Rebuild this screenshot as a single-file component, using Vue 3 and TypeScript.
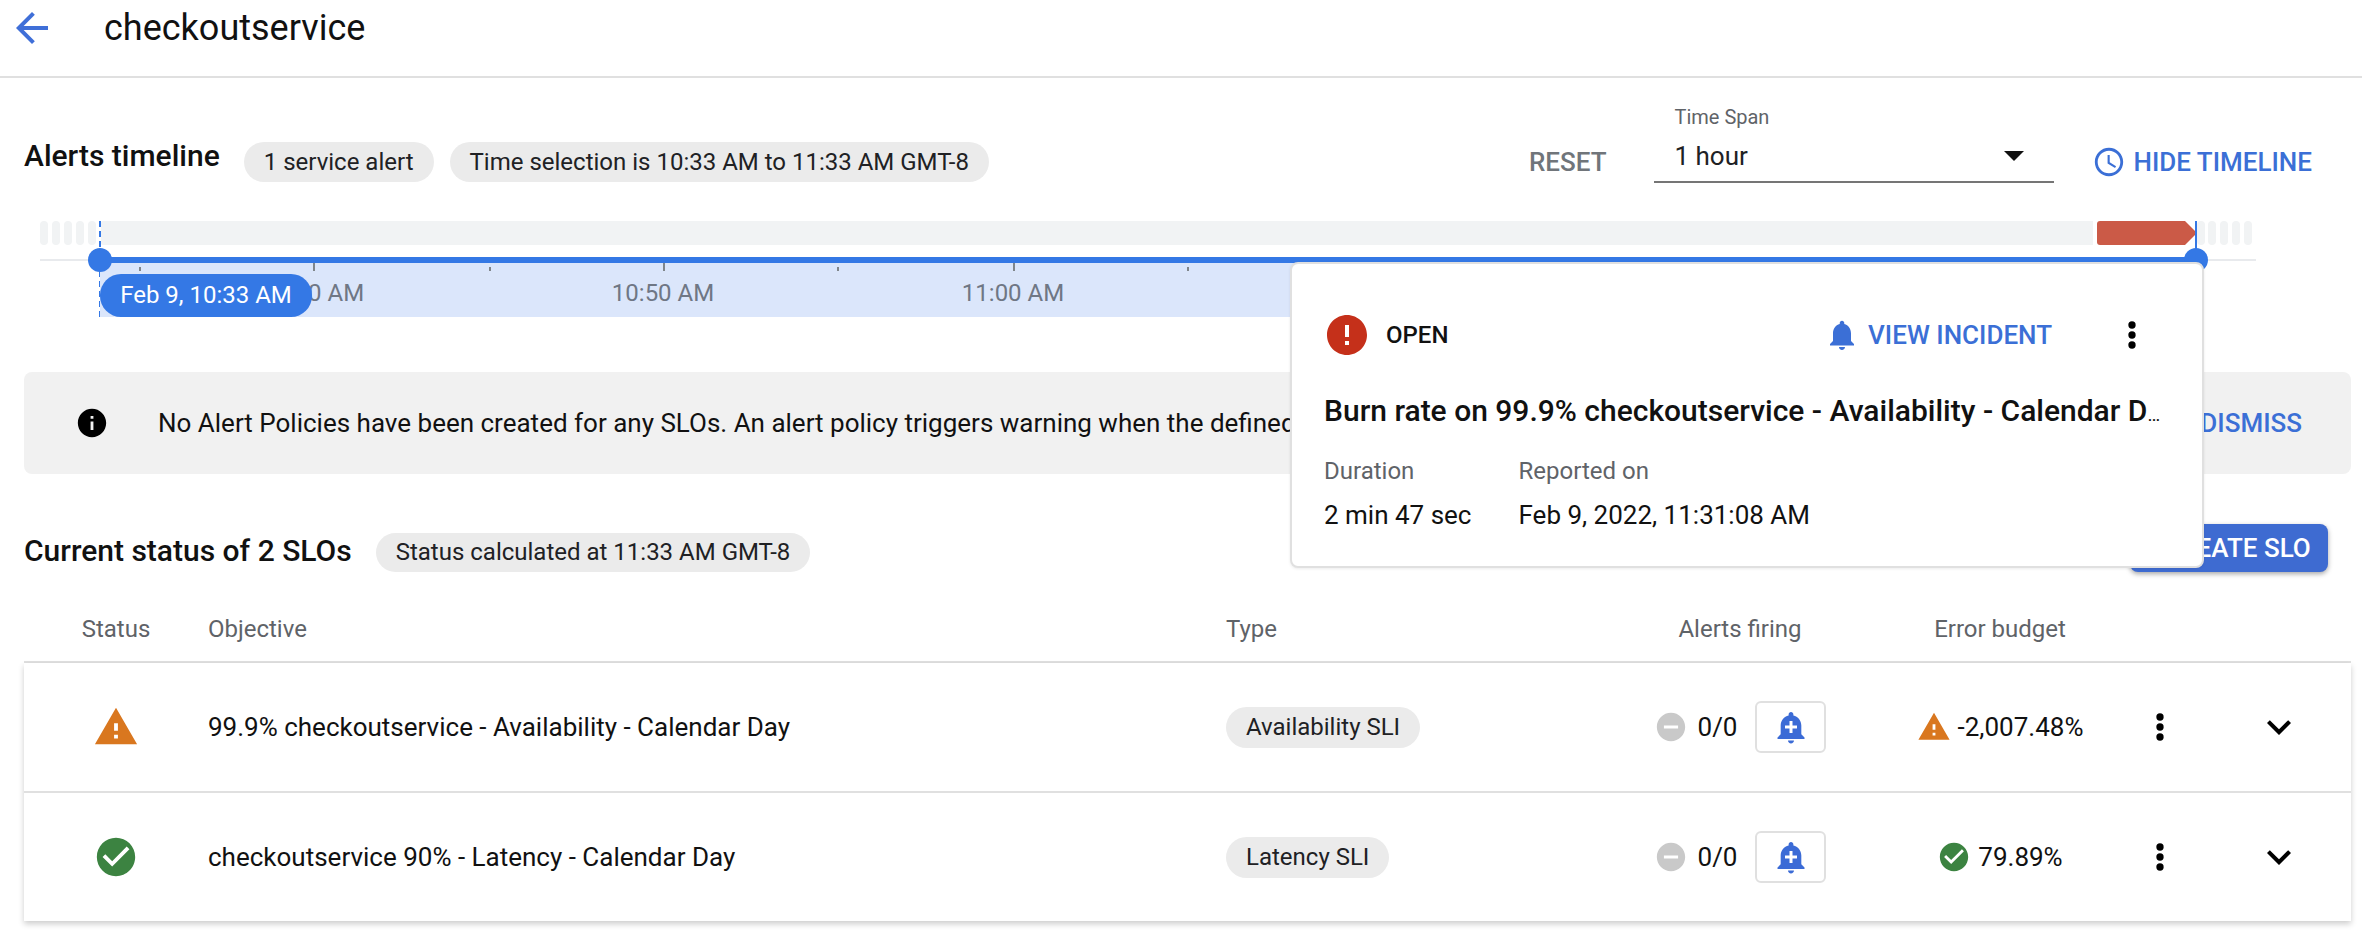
<template>
  <div class="page">
    <!-- Top bar -->
    <header class="topbar">
      <svg class="back-icon" viewBox="0 0 24 24"><path :d="icons.back" /></svg>
      <h1 class="topbar__title">checkoutservice</h1>
    </header>

    <!-- Timeline header -->
    <section class="tl-head">
      <h2 class="section-title tl-head__title">Alerts timeline</h2>
      <span class="chip chip--alert">1 service alert</span>
      <span class="chip chip--range">Time selection is 10:33 AM to 11:33 AM GMT-8</span>
      <button class="text-btn text-btn--grey">RESET</button>
      <div class="span-field">
        <span class="span-field__label">Time Span</span>
        <div class="span-field__value">
          <span>1 hour</span>
          <i class="span-field__arrow"></i>
        </div>
      </div>
      <button class="text-btn text-btn--blue hide-btn">
        <svg class="hide-btn__icon" viewBox="0 0 24 24"><path :d="icons.clock" /></svg>
        HIDE TIMELINE
      </button>
    </section>

    <!-- Timeline canvas -->
    <section class="timeline">
      <i v-for="x in pills" :key="x" class="pill" :style="{ left: x + 'px' }"></i>
      <div class="track"></div>
      <div class="incident"></div>
      <i class="dash dash--left"></i>
      <i class="cursor cursor--right"></i>
      <div class="axis"></div>
      <div class="selection"></div>
      <div class="range-bar"></div>
      <i class="handle handle--left"></i>
      <i class="handle handle--right"></i>
      <i
        v-for="t in ticks"
        :key="t.x"
        class="tick"
        :class="{ 'tick--major': t.major }"
        :style="{ left: t.x + 'px' }"
      ></i>
      <span
        v-for="l in tickLabels"
        :key="l.text"
        class="tick-label"
        :style="{ left: l.x + 'px' }"
      >{{ l.text }}</span>
      <span class="date-chip">Feb 9, 10:33 AM</span>

      <!-- Incident popup -->
      <div class="popup">
        <div class="popup__top">
          <svg class="popup__status" viewBox="0 0 24 24"><path :d="icons.error" /></svg>
          <span class="popup__open">OPEN</span>
          <button class="text-btn text-btn--blue popup__view">
            <svg class="popup__bell" viewBox="0 0 24 24"><path :d="icons.bell" /></svg>
            VIEW INCIDENT
          </button>
          <svg class="more-icon popup__more" viewBox="0 0 24 24">
            <circle cx="12" cy="6" r="2.2" /><circle cx="12" cy="12" r="2.2" /><circle cx="12" cy="18" r="2.2" />
          </svg>
        </div>
        <div class="popup__title">Burn rate on 99.9% checkoutservice - Availability - Calendar D<span class="popup__ellipsis">…</span></div>
        <div class="popup__meta">
          <div class="popup__col">
            <span class="popup__label">Duration</span>
            <span class="popup__val">2 min 47 sec</span>
          </div>
          <div class="popup__col">
            <span class="popup__label">Reported on</span>
            <span class="popup__val">Feb 9, 2022, 11:31:08 AM</span>
          </div>
        </div>
      </div>
    </section>

    <!-- Banner -->
    <section class="banner">
      <svg class="banner__icon" viewBox="0 0 24 24"><path :d="icons.info" /></svg>
      <p class="banner__text">No Alert Policies have been created for any SLOs. An alert policy triggers warning when the defined</p>
      <button class="text-btn text-btn--blue">DISMISS</button>
    </section>

    <!-- Status -->
    <section class="status-head">
      <h2 class="section-title status-head__title">Current status of 2 SLOs</h2>
      <span class="chip chip--calc">Status calculated at 11:33 AM GMT-8</span>
      <button class="create-btn">CREATE SLO</button>
    </section>

    <section class="table">
      <div class="row row--head">
        <span class="cell--center">Status</span>
        <span>Objective</span>
        <span>Type</span>
        <span class="cell--center">Alerts firing</span>
        <span class="cell--center">Error budget</span>
      </div>
      <div class="table__body">
        <div v-for="slo in slos" :key="slo.name" class="row">
          <span class="cell--center">
            <svg class="status-icon" :class="`is-${slo.state}`" viewBox="0 0 24 24">
              <path :d="slo.state === 'warn' ? icons.warning : icons.check" />
            </svg>
          </span>
          <span>{{ slo.name }}</span>
          <span><span class="chip chip--type">{{ slo.type }}</span></span>
          <span class="alerts">
            <svg class="alerts__icon" viewBox="0 0 24 24"><path :d="icons.remove" /></svg>
            <span>0/0</span>
            <button class="bell-btn">
              <svg viewBox="0 0 24 24"><path :d="icons.addAlert" /></svg>
            </button>
          </span>
          <span class="budget">
            <svg class="budget__icon" :class="`is-${slo.state}`" viewBox="0 0 24 24">
              <path :d="slo.state === 'warn' ? icons.warning : icons.check" />
            </svg>
            {{ slo.budget }}
          </span>
          <span class="cell--center">
            <svg class="more-icon" viewBox="0 0 24 24">
              <circle cx="12" cy="6" r="2.2" /><circle cx="12" cy="12" r="2.2" /><circle cx="12" cy="18" r="2.2" />
            </svg>
          </span>
          <span class="expand">
            <svg class="expand__icon" viewBox="0 0 24 24"><path :d="icons.expand" /></svg>
          </span>
        </div>
      </div>
    </section>
  </div>
</template>

<script setup lang="ts">
const icons = {
  back: 'M20 11H7.83l5.59-5.59L12 4l-8 8 8 8 1.41-1.41L7.83 13H20v-2z',
  clock:
    'M11.99 2C6.47 2 2 6.48 2 12s4.47 10 9.99 10C17.52 22 22 17.52 22 12S17.52 2 11.99 2zM12 20c-4.42 0-8-3.58-8-8s3.58-8 8-8 8 3.58 8 8-3.58 8-8 8zM12.5 7H11v6l5.25 3.15.75-1.23-4.5-2.67z',
  error:
    'M12 2C6.48 2 2 6.48 2 12s4.48 10 10 10 10-4.48 10-10S17.52 2 12 2zm1 15h-2v-2h2v2zm0-4h-2V7h2v6z',
  info: 'M12 2C6.48 2 2 6.48 2 12s4.48 10 10 10 10-4.48 10-10S17.52 2 12 2zm1 15h-2v-6h2v6zm0-8h-2V7h2v2z',
  bell: 'M12 22c1.1 0 2-.9 2-2h-4c0 1.1.89 2 2 2zm6-6v-5c0-3.07-1.64-5.64-4.5-6.32V4c0-.83-.67-1.5-1.5-1.5s-1.5.67-1.5 1.5v.68C7.63 5.36 6 7.92 6 11v5l-2 2v1h16v-1l-2-2z',
  addAlert:
    'M10.01 21.01c0 1.1.89 1.99 1.99 1.99s1.99-.89 1.99-1.99h-3.98zm8.87-4.19V11c0-3.25-2.25-5.97-5.29-6.69v-.72C13.59 2.71 12.88 2 12 2s-1.59.71-1.59 1.59v.72C7.37 5.03 5.12 7.75 5.12 11v5.82L3 18.94V20h18v-1.06l-2.12-2.12zM16 13.01h-3v3h-2v-3H8V11h3V8h2v3h3v2.01z',
  warning: 'M1 21h22L12 2 1 21zm12-3h-2v-2h2v2zm0-4h-2v-4h2v4z',
  check:
    'M12 2C6.48 2 2 6.48 2 12s4.48 10 10 10 10-4.48 10-10S17.52 2 12 2zm-2 15l-5-5 1.41-1.41L10 14.17l7.59-7.59L19 8l-9 9z',
  remove:
    'M12 2C6.48 2 2 6.48 2 12s4.48 10 10 10 10-4.48 10-10S17.52 2 12 2zm5 11H7v-2h10v2z',
  expand: 'M16.59 8.59L12 13.17 7.41 8.59 6 10l6 6 6-6z',
};

const pills = [40, 52, 64, 76, 88, 2197, 2208, 2220, 2232, 2244];

const ticks = [139, 313, 489, 663, 837, 1013, 1187].map((x, i) => ({
  x,
  major: i % 2 === 1,
}));

const tickLabels = [
  { x: 313, text: '10:40 AM' },
  { x: 663, text: '10:50 AM' },
  { x: 1013, text: '11:00 AM' },
];

const slos = [
  {
    name: '99.9% checkoutservice - Availability - Calendar Day',
    type: 'Availability SLI',
    budget: '-2,007.48%',
    state: 'warn',
  },
  {
    name: 'checkoutservice 90% - Latency - Calendar Day',
    type: 'Latency SLI',
    budget: '79.89%',
    state: 'ok',
  },
];
</script>

<style>
html,
body {
  margin: 0;
  background: #fff;
  overflow: hidden;
}
</style>

<style scoped>
.page {
  width: 2362px;
  height: 940px;
  overflow: hidden;
  font-family: Roboto, 'Liberation Sans', sans-serif;
  font-size: 26px;
  color: #111;
  background: #fff;
}

button {
  font: inherit;
  border: none;
  background: none;
  padding: 0;
}

/* Top bar */
.topbar {
  display: flex;
  align-items: center;
  box-sizing: border-box;
  height: 78px;
  padding-bottom: 20px;
  border-bottom: 2px solid #e0e0e0;
}
.back-icon {
  width: 48px;
  height: 48px;
  margin-left: 8px;
  fill: #3f6fd8;
}
.topbar__title {
  margin: 0 0 0 48px;
  font-size: 36px;
  font-weight: 400;
  color: #111;
}

/* Timeline header */
.tl-head {
  display: flex;
  align-items: center;
  height: 119px;
  margin-top: 24px;
  padding-left: 24px;
}
.section-title {
  margin: 0;
  font-size: 30px;
  font-weight: 500;
  white-space: nowrap;
}
.tl-head__title {
  margin-bottom: 12px;
}
.status-head__title {
  margin-top: 5px;
}
.chip {
  display: inline-flex;
  align-items: center;
  border-radius: 21px;
  background: #ebebeb;
  font-size: 24px;
  color: #202124;
  white-space: nowrap;
}
.chip--alert {
  height: 40px;
  margin-left: 24px;
  padding: 0 20px;
}
.chip--range {
  height: 40px;
  margin-left: 16px;
  padding: 0 20px;
}
.text-btn {
  font-size: 26px;
  font-weight: 500;
  white-space: nowrap;
}
.text-btn--grey {
  margin-left: auto;
  color: #70757a;
}
.text-btn--blue {
  color: #3b6fd6;
}
.span-field {
  display: flex;
  flex-direction: column;
  align-self: flex-start;
  box-sizing: border-box;
  width: 400px;
  height: 78px;
  margin: 3px 0 0 48px;
  padding-left: 20px;
  border-bottom: 2px solid #757575;
}
.span-field__label {
  font-size: 20px;
  line-height: 24px;
  color: #5f6368;
}
.span-field__value {
  display: flex;
  align-items: center;
  justify-content: space-between;
  margin-top: 11px;
  padding-right: 30px;
  line-height: 32px;
  color: #202124;
}
.span-field__arrow {
  width: 0;
  height: 0;
  border-left: 10px solid transparent;
  border-right: 10px solid transparent;
  border-top: 10px solid #111;
}
.hide-btn {
  display: flex;
  align-items: center;
  gap: 7px;
  margin: 0 50px 0 38px;
}
.hide-btn__icon {
  width: 34px;
  height: 34px;
  fill: #3b6fd6;
}

/* Timeline canvas */
.timeline {
  position: relative;
  height: 151px;
}
.pill {
  position: absolute;
  top: 0;
  width: 8px;
  height: 24px;
  border-radius: 4px;
  background: #f1f3f4;
}
.track {
  position: absolute;
  top: 0;
  left: 101px;
  width: 1992px;
  height: 24px;
  border-radius: 2px 0 0 2px;
  background: #f1f3f4;
}
.incident {
  position: absolute;
  top: 0;
  left: 2097px;
  width: 100px;
  height: 24px;
  border-radius: 3px 0 0 3px;
  background: #cb5a47;
  clip-path: polygon(0 0, 88% 0, 100% 50%, 88% 100%, 0 100%);
}
.dash {
  position: absolute;
  top: 0;
  left: 99px;
  height: 96px;
  border-left: 2px dashed #3478e5;
}
.cursor {
  position: absolute;
  top: 0;
  left: 2195px;
  height: 36px;
  border-left: 2px solid #3478e5;
}
.axis {
  position: absolute;
  top: 38px;
  left: 40px;
  width: 2216px;
  height: 2px;
  background: #e8eaed;
}
.selection {
  position: absolute;
  top: 40px;
  left: 100px;
  width: 1300px;
  height: 56px;
  background: #dbe6fb;
}
.range-bar {
  position: absolute;
  top: 36px;
  left: 100px;
  width: 2096px;
  height: 6px;
  background: #3478e5;
}
.handle {
  position: absolute;
  top: 27px;
  width: 24px;
  height: 24px;
  border-radius: 50%;
  background: #3478e5;
}
.handle--left {
  left: 88px;
}
.handle--right {
  left: 2184px;
}
.tick {
  position: absolute;
  top: 46px;
  width: 2px;
  height: 4px;
  background: #80868b;
}
.tick--major {
  top: 42px;
  height: 8px;
}
.tick-label {
  position: absolute;
  top: 59px;
  transform: translateX(-50%);
  font-size: 24px;
  line-height: 26px;
  color: #6f7785;
  white-space: nowrap;
}
.date-chip {
  position: absolute;
  top: 53px;
  left: 100px;
  display: flex;
  align-items: center;
  justify-content: center;
  width: 212px;
  height: 43px;
  padding-bottom: 2px;
  box-sizing: border-box;
  border-radius: 21px;
  background: #3478e5;
  font-size: 24px;
  color: #fff;
  white-space: nowrap;
}

/* Popup */
.popup {
  position: absolute;
  z-index: 5;
  top: 41px;
  left: 1290px;
  display: flex;
  flex-direction: column;
  box-sizing: border-box;
  width: 914px;
  height: 306px;
  padding: 0 32px;
  border: 2px solid #e0e0e0;
  border-radius: 8px;
  background: #fff;
  box-shadow: 0 1px 3px rgba(0, 0, 0, 0.08);
}
.popup__top {
  display: flex;
  align-items: center;
  height: 46px;
  margin-top: 48px;
}
.popup__status {
  width: 48px;
  height: 48px;
  margin-left: -1px;
  fill: #c5301a;
  flex: none;
}
.popup__open {
  margin-left: 15px;
  font-size: 24px;
  font-weight: 500;
}
.popup__view {
  display: flex;
  align-items: center;
  gap: 8px;
  margin-left: auto;
}
.popup__bell {
  width: 36px;
  height: 36px;
  fill: #3b6fd6;
}
.popup__more {
  margin: 0 18px 0 60px;
}
.popup__title {
  margin-top: 36px;
  font-size: 30px;
  font-weight: 500;
  line-height: 34px;
  white-space: nowrap;
}
.popup__ellipsis {
  font-size: 19px;
  font-weight: 400;
}
.popup__meta {
  display: flex;
  gap: 47px;
  margin-top: 25px;
}
.popup__col {
  display: flex;
  flex-direction: column;
  gap: 16px;
}
.popup__label {
  font-size: 24px;
  line-height: 28px;
  color: #5f6368;
}
.popup__val {
  font-size: 26px;
  line-height: 28px;
}

/* Banner */
.banner {
  display: flex;
  align-items: center;
  height: 102px;
  margin: 0 11px 0 24px;
  border-radius: 8px;
  background: #f1f1f1;
}
.banner__icon {
  flex: none;
  width: 34px;
  height: 34px;
  margin-left: 51px;
  fill: #000;
}
.banner__text {
  flex: 1;
  margin: 0 0 0 49px;
  white-space: nowrap;
  overflow: hidden;
}
.banner .text-btn {
  margin-right: 49px;
}

/* Status header */
.status-head {
  display: flex;
  align-items: center;
  height: 48px;
  margin-top: 50px;
  padding-left: 24px;
}
.chip--calc {
  height: 39px;
  margin: 8px 0 0 24px;
  padding: 0 20px;
}
.create-btn {
  margin: 0 34px 0 auto;
  box-sizing: border-box;
  width: 198px;
  height: 48px;
  padding-left: 16px;
  border-radius: 8px;
  background: #3e6bd1;
  box-shadow: 0 2px 5px rgba(0, 0, 0, 0.35);
  color: #fff;
  font-size: 26px;
  font-weight: 500;
  white-space: nowrap;
}

/* Table */
.table {
  margin: 0 11px 0 24px;
}
.row {
  display: grid;
  grid-template-columns: 184px 1018px 374px 280px 240px 80px 1fr;
  align-items: center;
  height: 128px;
}
.row--head {
  box-sizing: border-box;
  height: 91px;
  padding-top: 24px;
  border-bottom: 2px solid #e0e0e0;
  font-size: 24px;
  color: #5f6368;
}
.table__body {
  box-shadow: 0 3px 6px rgba(0, 0, 0, 0.2);
}
.table__body .row + .row {
  height: 130px;
  border-top: 2px solid #e0e0e0;
  box-sizing: border-box;
}
.cell--center {
  display: flex;
  justify-content: center;
  text-align: center;
}
.status-icon {
  width: 46px;
  height: 46px;
}
.is-warn {
  fill: #d9771f;
}
.is-ok {
  fill: #3c8341;
}
.chip--type {
  height: 41px;
  padding: 0 20px;
}
.alerts {
  display: flex;
  align-items: center;
  justify-content: center;
}
.alerts__icon {
  width: 34px;
  height: 34px;
  fill: #c9c9c9;
}
.alerts > span {
  margin-left: 10px;
}
.bell-btn {
  display: flex;
  align-items: center;
  justify-content: center;
  box-sizing: border-box;
  width: 71px;
  height: 52px;
  margin-left: 18px;
  border: 2px solid #e0e0e0;
  border-radius: 6px;
  background: #fff;
}
.bell-btn svg {
  width: 36px;
  height: 36px;
  fill: #3b6bd6;
}
.budget {
  display: flex;
  align-items: center;
  justify-content: center;
  gap: 7px;
}
.budget__icon {
  width: 34px;
  height: 34px;
}
.more-icon {
  width: 40px;
  height: 40px;
  flex: none;
  fill: #000;
}
.expand {
  display: flex;
  padding-left: 55px;
}
.expand__icon {
  width: 48px;
  height: 48px;
  fill: #000;
}
</style>
